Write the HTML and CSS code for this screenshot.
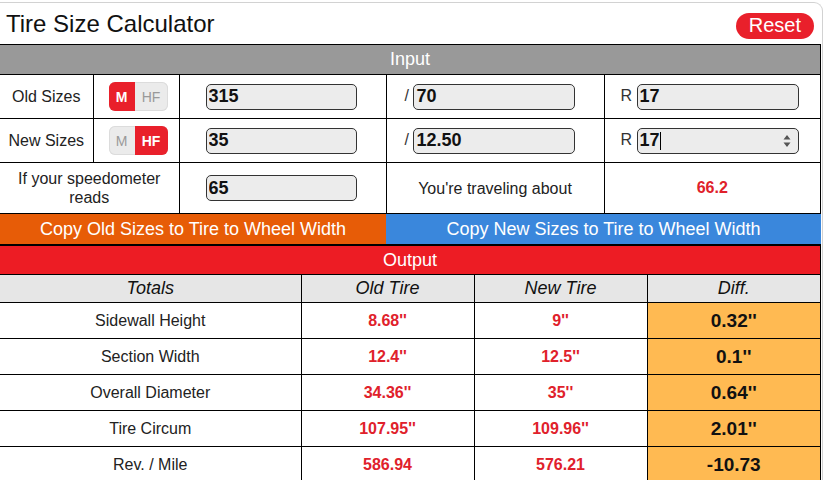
FILE: index.html
```html
<!DOCTYPE html>
<html lang="en">
<head>
    <meta charset="UTF-8">
    <meta name="viewport" content="width=device-width, initial-scale=1.0">
    <title>Tire Size Calculator</title>
    <link rel="stylesheet" href="styles.css">
</head>
<body>
    <div class="card">
        <div class="title-bar">
            <h1>Tire Size Calculator</h1>
            <button type="button" class="reset">Reset</button>
        </div>

        <table class="calc input-table">
            <colgroup>
                <col class="c-label">
                <col class="c-unit">
                <col class="c-width">
                <col class="c-ratio">
                <col class="c-rim">
            </colgroup>
            <tr>
                <th colspan="5" class="section gray">Input</th>
            </tr>
            <tr class="size-row">
                <td class="label">Old Sizes</td>
                <td class="unit">
                    <div class="unit-toggle">
                        <span class="opt m on">M</span><span class="opt hf">HF</span>
                    </div>
                </td>
                <td class="field main"><input type="text" class="size-input w-main" value="315"></td>
                <td class="field slash">/ <input type="text" class="size-input w-side" value="70"></td>
                <td class="field rim">R <input type="text" class="size-input w-side" value="17"></td>
            </tr>
            <tr class="size-row">
                <td class="label">New Sizes</td>
                <td class="unit">
                    <div class="unit-toggle">
                        <span class="opt m">M</span><span class="opt hf on">HF</span>
                    </div>
                </td>
                <td class="field main"><input type="text" class="size-input w-main" value="35"></td>
                <td class="field slash">/ <input type="text" class="size-input w-side" value="12.50"></td>
                <td class="field rim">
                    R <span class="spin-wrap"><input type="text" class="size-input w-side" value="17"><span class="caret"></span>
                        <svg class="spinner" width="8" height="14" viewBox="0 0 8 14"><path d="M4 1 L7.5 5.5 H0.5 Z M4 13 L7.5 8.5 H0.5 Z" fill="#555"/></svg>
                    </span>
                </td>
            </tr>
            <tr class="speed-row">
                <td colspan="2" class="label">If your speedometer reads</td>
                <td class="field main"><input type="text" class="size-input w-main" value="65"></td>
                <td class="label">You're traveling about</td>
                <td class="value">66.2</td>
            </tr>
        </table>

        <div class="copy-row">
            <button type="button" class="copy-btn copy-old">Copy Old Sizes to Tire to Wheel Width</button>
            <button type="button" class="copy-btn copy-new">Copy New Sizes to Tire to Wheel Width</button>
        </div>

        <table class="calc output-table">
            <colgroup>
                <col class="o-name">
                <col class="o-val">
                <col class="o-val">
                <col class="o-diff">
            </colgroup>
            <tr>
                <th colspan="4" class="section red">Output</th>
            </tr>
            <tr class="col-head">
                <th>Totals</th>
                <th>Old Tire</th>
                <th>New Tire</th>
                <th>Diff.</th>
            </tr>
            <tr>
                <td>Sidewall Height</td>
                <td class="num">8.68''</td>
                <td class="num">9''</td>
                <td class="diff">0.32''</td>
            </tr>
            <tr>
                <td>Section Width</td>
                <td class="num">12.4''</td>
                <td class="num">12.5''</td>
                <td class="diff">0.1''</td>
            </tr>
            <tr>
                <td>Overall Diameter</td>
                <td class="num">34.36''</td>
                <td class="num">35''</td>
                <td class="diff">0.64''</td>
            </tr>
            <tr>
                <td>Tire Circum</td>
                <td class="num">107.95''</td>
                <td class="num">109.96''</td>
                <td class="diff">2.01''</td>
            </tr>
            <tr>
                <td>Rev. / Mile</td>
                <td class="num">586.94</td>
                <td class="num">576.21</td>
                <td class="diff">-10.73</td>
            </tr>
        </table>
    </div>
</body>
</html>
```

FILE: styles.css
```css
body {
    margin: 0;
    font-family: "Liberation Sans", Arial, sans-serif;
    background-color: #fff;
    color: #222;
}
.card {
    width: 822px;
    margin-top: 2px;
    border-top: 1px solid #d2d2d2;
    border-right: 1px solid #d2d2d2;
    border-top-right-radius: 9px;
    overflow: hidden;
}
.title-bar {
    display: flex;
    justify-content: space-between;
    align-items: center;
    height: 41px;
    padding: 0 8px 0 6px;
}
h1 {
    margin: 0;
    font-size: 24px;
    font-weight: normal;
    color: #111;
}
.reset {
    height: 26px;
    margin-top: 4px;
    padding: 0 13px;
    font-family: inherit;
    font-size: 20px;
    color: #fff;
    background-color: #e9202b;
    border: none;
    border-radius: 14px;
}
.calc {
    width: 821px;
    border-collapse: collapse;
    table-layout: fixed;
}
.calc th,
.calc td {
    border: 1px solid #000;
    padding: 0;
    text-align: center;
}
.calc tr > :first-child {
    border-left: none;
}
.section {
    height: 28px;
    font-size: 18px;
    font-weight: normal;
    color: #fff;
}
.section.gray {
    height: 29px;
    background-color: #999;
}
.section.red {
    background-color: #ed1c24;
}
.c-label { width: 93px; }
.c-unit { width: 86px; }
.c-width { width: 207px; }
.c-ratio { width: 218px; }
.size-row td {
    height: 43px;
}
.speed-row td {
    height: 50px;
}
.label {
    font-size: 16px;
    line-height: 19px;
    color: #222;
}
.unit {
    text-align: left !important;
    padding-left: 15px !important;
}
.unit-toggle {
    display: inline-flex;
    height: 29px;
    border-radius: 6px;
    overflow: hidden;
    background-color: #ebebeb;
    box-shadow: inset 0 0 0 1px #dcdcdc;
    vertical-align: middle;
}
.opt {
    display: flex;
    align-items: center;
    justify-content: center;
    font-size: 14px;
    color: #999;
}
.opt.m { width: 26px; }
.opt.hf { width: 33px; }
.opt.on {
    background-color: #e9202b;
    color: #fff;
    font-weight: bold;
}
.field {
    text-align: left !important;
    font-size: 16px;
    color: #333;
    white-space: nowrap;
}
.field.main {
    padding-left: 26px !important;
}
.slash {
    padding-left: 18px !important;
}
.rim {
    padding-left: 16px !important;
}
.size-input {
    box-sizing: border-box;
    height: 26px;
    padding: 0 2px;
    font-family: inherit;
    font-size: 18px;
    font-weight: bold;
    color: #111;
    background-color: #ececec;
    border: 1px solid #333;
    border-radius: 5px;
    vertical-align: middle;
}
.w-main { width: 151px; }
.w-side { width: 162px; }
.spin-wrap {
    position: relative;
    display: inline-block;
    vertical-align: middle;
}
.spinner {
    position: absolute;
    right: 8px;
    top: 6px;
}
.caret {
    position: absolute;
    left: 23px;
    top: 4px;
    width: 1px;
    height: 18px;
    background-color: #000;
}
.value {
    font-size: 16px;
    font-weight: bold;
    color: #e0212b;
}
.copy-row {
    display: flex;
    width: 821px;
    border-bottom: 2px solid #000;
}
.copy-btn {
    height: 30px;
    padding: 0;
    font-family: inherit;
    font-size: 18px;
    color: #fff;
    border: none;
}
.copy-old {
    width: 386px;
    background-color: #e75c07;
}
.copy-new {
    flex: 1;
    background-color: #3a87dc;
}
.output-table th.section {
    border-top: none;
}
.o-name { width: 301px; }
.o-val { width: 173px; }
.col-head th {
    height: 27px;
    font-size: 18px;
    font-weight: normal;
    font-style: italic;
    color: #111;
    background-color: #e6e6e6;
}
.output-table td {
    height: 35px;
    font-size: 16px;
    color: #222;
}
.output-table td.num {
    font-weight: bold;
    color: #e0212b;
}
.output-table td.diff {
    font-size: 19px;
    font-weight: bold;
    color: #111;
    background-color: #ffba52;
}
```
